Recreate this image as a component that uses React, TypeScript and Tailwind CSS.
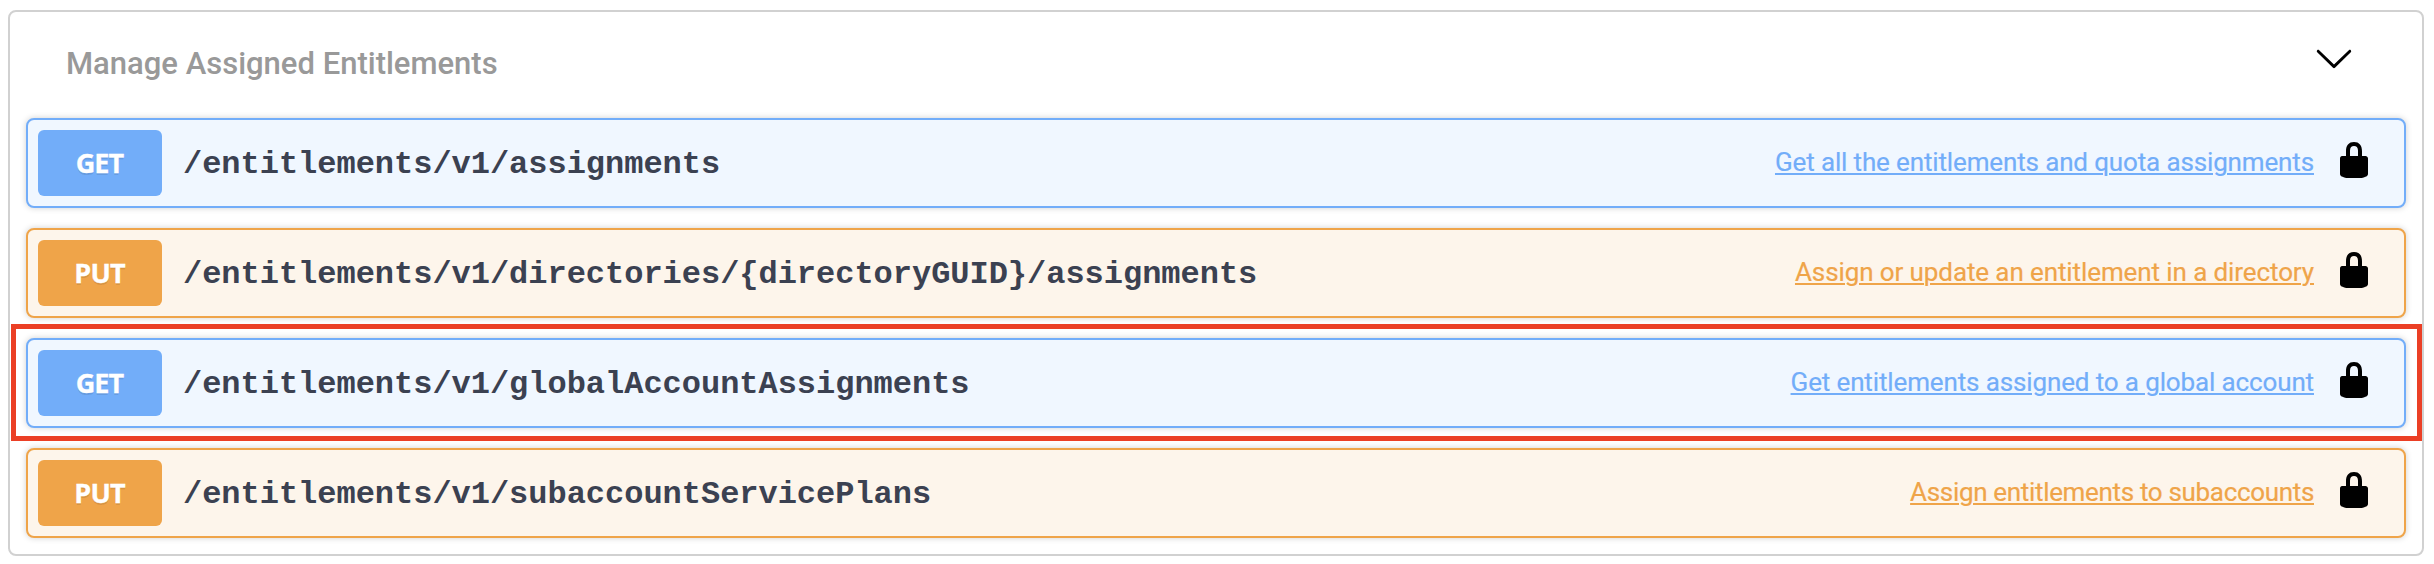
type Method = "GET" | "PUT";

interface Operation {
  method: Method;
  path: string;
  summary: string;
  tracking: string;
  highlighted?: boolean;
}

const operations: Operation[] = [
  {
    method: "GET",
    path: "/entitlements/v1/assignments",
    summary: "Get all the entitlements and quota assignments",
    tracking: "tracking-[-0.14px]",
  },
  {
    method: "PUT",
    path: "/entitlements/v1/directories/{directoryGUID}/assignments",
    summary: "Assign or update an entitlement in a directory",
    tracking: "tracking-[-0.1px]",
  },
  {
    method: "GET",
    path: "/entitlements/v1/globalAccountAssignments",
    summary: "Get entitlements assigned to a global account",
    tracking: "tracking-[-0.13px]",
    highlighted: true,
  },
  {
    method: "PUT",
    path: "/entitlements/v1/subaccountServicePlans",
    summary: "Assign entitlements to subaccounts",
    tracking: "tracking-[-0.33px]",
  },
];

const rowTone: Record<Method, string> = {
  GET: "border-[#72adf9] bg-[#f0f7ff]",
  PUT: "border-[#efa449] bg-[#fdf5eb]",
};

const badgeTone: Record<Method, string> = {
  GET: "bg-[#72adf9]",
  PUT: "bg-[#efa449]",
};

const linkTone: Record<Method, string> = {
  GET: "text-[#72adf9]",
  PUT: "text-[#efa449]",
};

function LockIcon() {
  return (
    <svg viewBox="0 0 20 20" className="size-10 shrink-0 fill-black">
      <path d="M15.8 8H14V5.6C14 2.703 12.665 1 10 1 7.334 1 6 2.703 6 5.6V8H4c-.553 0-1 .646-1 1.199V17c0 .549.428 1.139.951 1.307l1.197.387C5.672 18.861 6.55 19 7.1 19h5.8c.549 0 1.428-.139 1.951-.307l1.196-.387c.524-.167.953-.757.953-1.306V9.199C17 8.646 16.352 8 15.8 8zM12 8H8V5.199C8 3.754 8.797 3 10 3c1.203 0 2 .754 2 2.199V8z" />
    </svg>
  );
}

function ChevronIcon() {
  return (
    <svg viewBox="0 0 20 20" className="size-10 shrink-0 fill-black">
      <path d="M17.418 6.109c.272-.268.709-.268.979 0s.271.701 0 .969l-7.908 7.83c-.27.268-.707.268-.979 0l-7.908-7.83c-.27-.268-.27-.701 0-.969.271-.268.709-.268.979 0L10 13.25l7.418-7.141z" />
    </svg>
  );
}

function OperationRow({ method, path, summary, tracking, highlighted }: Operation) {
  return (
    <div
      className={`relative flex h-[90px] items-start rounded-lg border-2 pt-2.5 pr-[30px] pl-2.5 shadow-[0_0_6px_rgba(0,0,0,0.19)] ${rowTone[method]}`}
    >
      <span
        className={`flex h-[66px] w-[124px] shrink-0 items-center justify-center rounded-md pr-px font-['Open_Sans',sans-serif] text-[27px] font-bold tracking-[-0.9px] text-white [-webkit-text-stroke:0.3px_currentColor] [text-shadow:0_2px_0_rgba(0,0,0,0.1)] ${badgeTone[method]}`}
      >
        {method}
      </span>
      <div className="flex h-[66px] grow items-center">
        <span className="ml-[21px] pt-[3px] font-['Liberation_Mono',monospace] text-[32px] leading-none font-bold tracking-[-0.02px] text-[#3b4151]">
          {path}
        </span>
        <a
          className={`mr-5 -mt-0.5 ml-auto text-[26px] leading-none underline decoration-[2px] underline-offset-[2px] [-webkit-text-stroke:0.2px_currentColor] ${tracking} ${linkTone[method]}`}
        >
          {summary}
        </a>
        <span className="-mt-1.5">
          <LockIcon />
        </span>
      </div>
      {highlighted && (
        <div className="pointer-events-none absolute -top-4 -right-[18px] -bottom-[15px] -left-[17px] border-5 border-[#eb3f25]" />
      )}
    </div>
  );
}

export default function App() {
  return (
    <main className="h-[564px] w-[2434px] bg-white pt-2.5 pl-2 font-['Roboto',sans-serif]">
      <section className="h-[546px] w-[2416px] rounded-lg border-2 border-[#d1d1d1] px-4">
        <header className="flex h-[106px] items-center justify-between pr-[52px] pl-10">
          <h2 className="-mt-1 text-[31px] leading-none font-medium text-[#999999]">Manage Assigned Entitlements</h2>
          <span className="-mt-3.5">
            <ChevronIcon />
          </span>
        </header>
        <div className="flex flex-col gap-5">
          {operations.map((operation) => (
            <OperationRow key={operation.path} {...operation} />
          ))}
        </div>
      </section>
    </main>
  );
}
